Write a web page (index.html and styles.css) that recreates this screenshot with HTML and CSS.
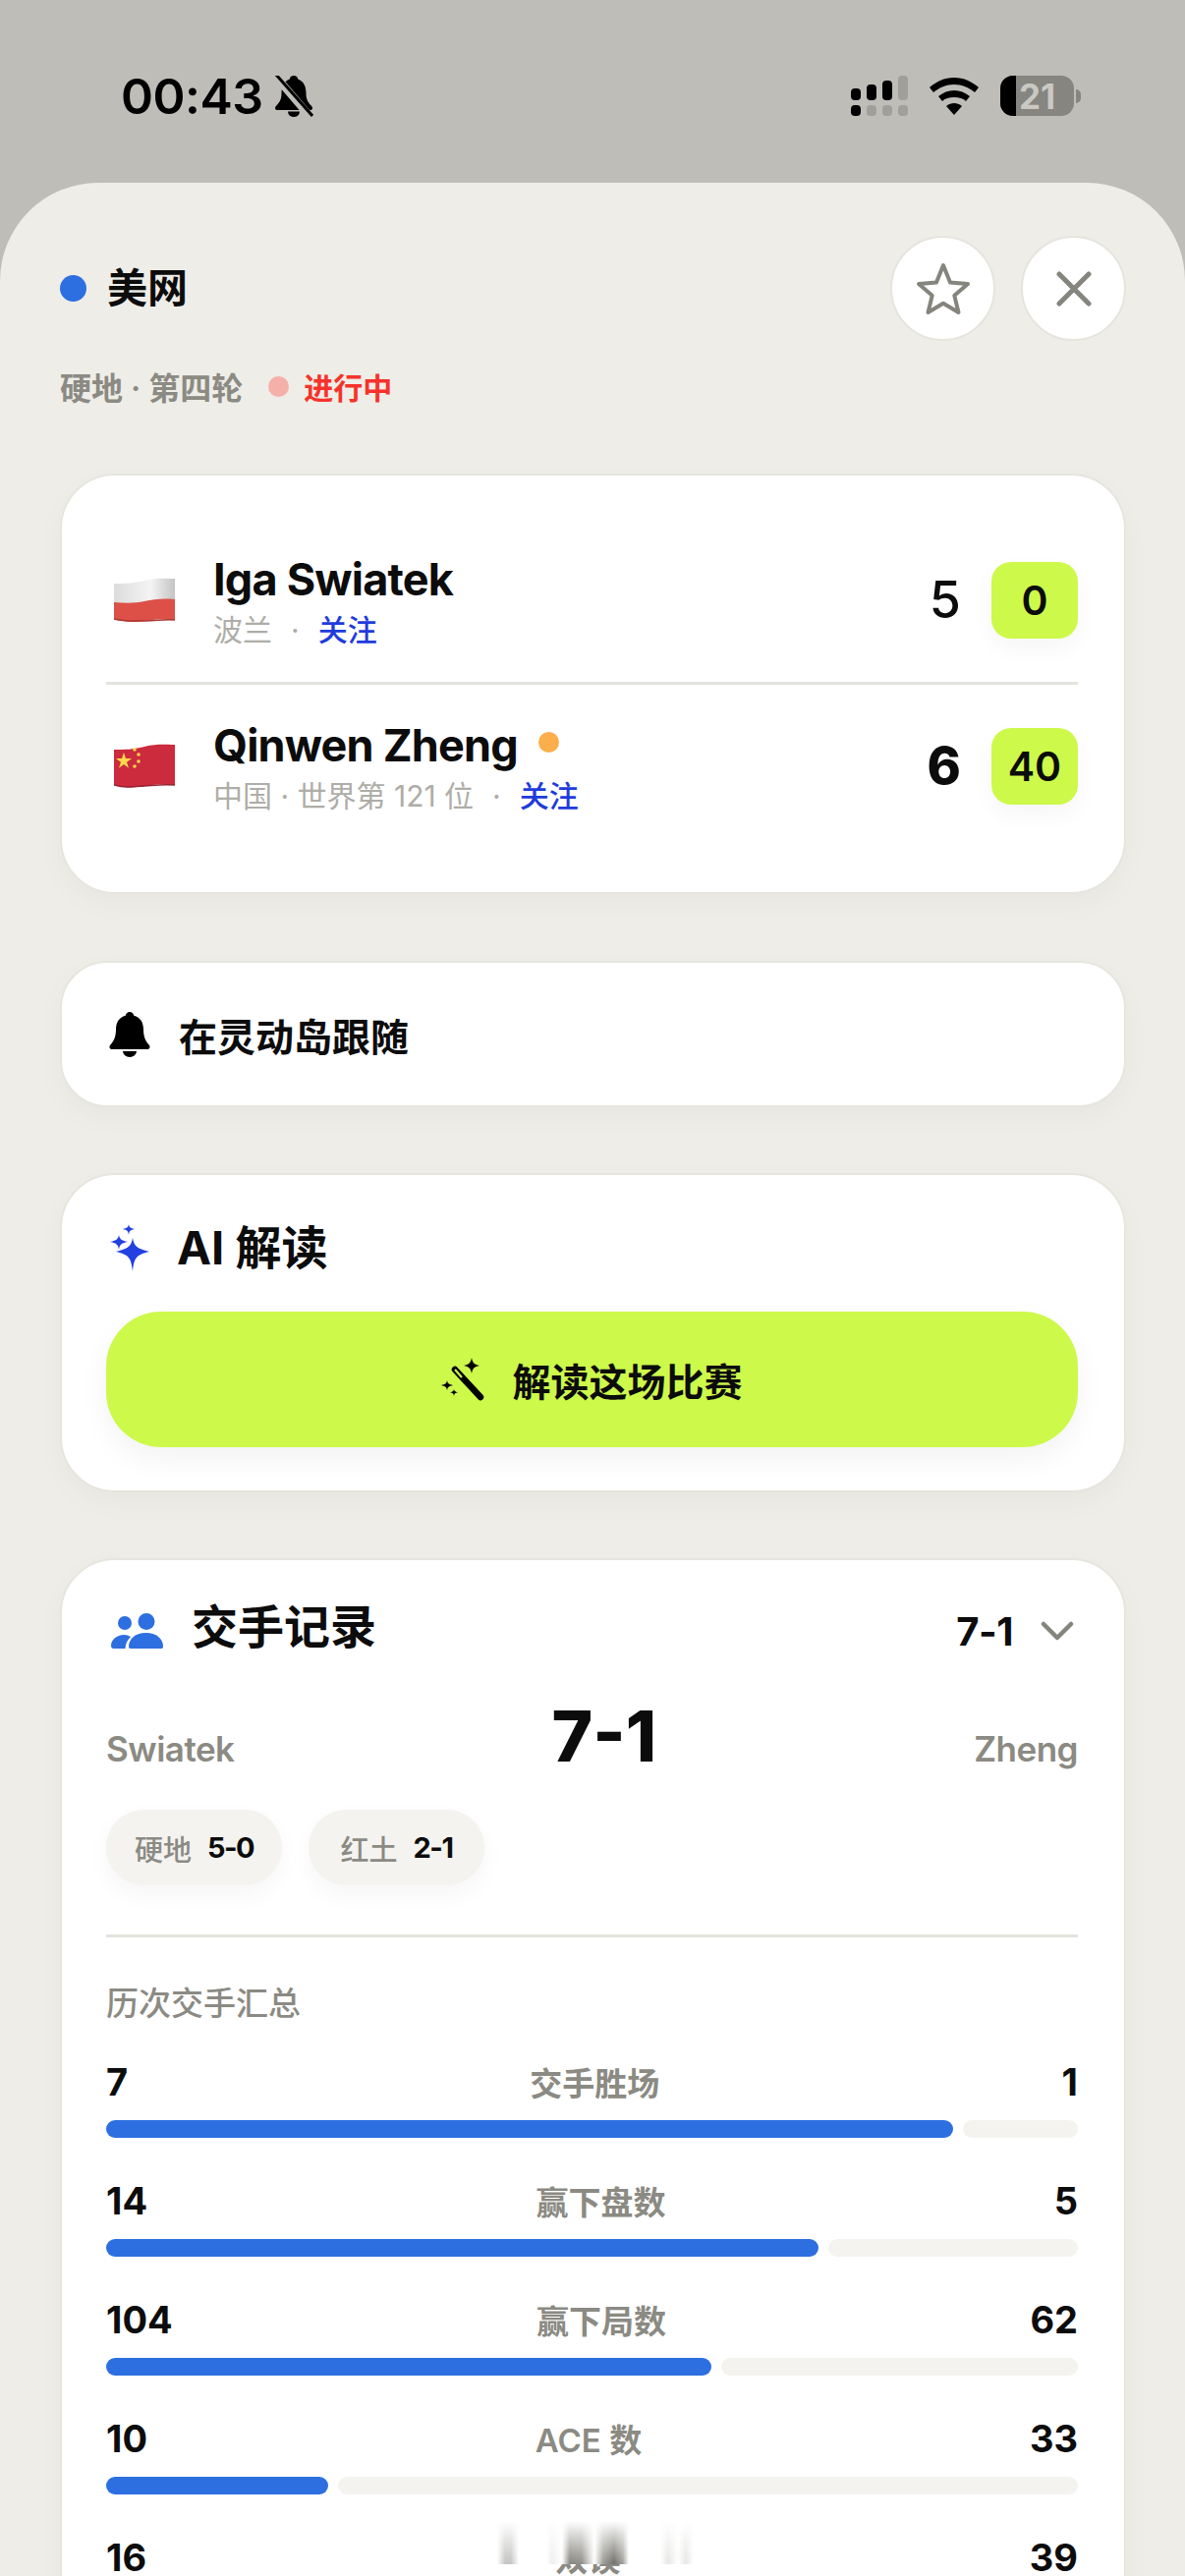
FILE: index.html
```html
<!DOCTYPE html>
<html lang="zh">
<head>
    <meta charset="UTF-8">
    <meta name="viewport" content="width=device-width, initial-scale=1.0">
    <title>美网</title>
    <link rel="stylesheet" href="styles.css">
</head>
<body>
    <!-- Barra de estado -->
    <div class="status-bar">
        <div class="status-left">
            <span class="time">00:43</span>
            <svg class="muted-bell" viewBox="0 0 40 42">
                <path d="M20 0c2.500 0 4 1.500 4.200 3.500C30 5.500 32.500 11 32.500 18c0 7 2.500 9.500 6 13.500 1 1.500.500 3.500-1.500 3.500H3c-2 0-2.500-2-1.500-3.500 3.500-4 6-6.500 6-13.500 0-7 2.500-12.500 8.300-14.500C16 1.500 17.500 0 20 0z" fill="#000"/>
                <path d="M14 36.500h12a6 5.500 0 0 1-12 0z" fill="#000"/>
                <path d="M0 -1l36 42" stroke="#bebdb8" stroke-width="8"/>
                <path d="M2 -1l37 42" stroke="#000" stroke-width="3"/>
            </svg>
        </div>
        <div class="status-right">
            <svg class="signal" viewBox="0 0 58 41">
                <rect x="0" y="13" width="10" height="12" rx="4" fill="#000"/>
                <rect x="16" y="9" width="10" height="16" rx="4" fill="#000"/>
                <rect x="32" y="5" width="10" height="20" rx="4" fill="#000"/>
                <rect x="48" y="0" width="10" height="25" rx="4" fill="#a09f9a"/>
                <rect x="0" y="30" width="10" height="11" rx="4" fill="#000"/>
                <rect x="16" y="30" width="10" height="11" rx="4" fill="#a09f9a"/>
                <rect x="32" y="30" width="10" height="11" rx="4" fill="#a09f9a"/>
                <rect x="48" y="30" width="10" height="11" rx="4" fill="#a09f9a"/>
            </svg>
            <svg class="wifi" viewBox="0 0 50 38">
                <path d="M25 0c10 0 18 4 25 10l-4 5C40 10 33 7 25 7S10 10 4 15l-4-5C7 4 15 0 25 0z" fill="#000"/>
                <path d="M25 13c6 0 11 2 16 6l-4 5c-3-3-7-4-12-4s-9 1-12 4l-4-5c5-4 10-6 16-6z" fill="#000"/>
                <path d="M25 26c3 0 5 .800 8 3L25 38l-8-9c3-2.200 5-3 8-3z" fill="#000"/>
            </svg>
            <div class="battery">
                <div class="battery-body">
                    <div class="battery-level"></div>
                    <span class="battery-text">21</span>
                </div>
                <div class="battery-nub"></div>
            </div>
        </div>
    </div>

    <div class="sheet">
        <!-- Cabecera -->
        <div class="header">
            <div class="tournament">
                <span class="tournament-dot"></span>
                <span class="tournament-name">美网</span>
            </div>
            <div class="header-buttons">
                <div class="round-btn">
                    <svg class="star-icon" viewBox="0 0 56 54">
                        <path d="M28 3l7 17.500 18 1.500-13.700 11.800L43.500 51 28 41.800 12.500 51l4.200-17.200L3 22l18-1.500z" fill="none" stroke="#85847d" stroke-width="4" stroke-linejoin="round"/>
                    </svg>
                </div>
                <div class="round-btn">
                    <svg class="close-icon" viewBox="0 0 36 36">
                        <path d="M3 3l30 30M33 3L3 33" stroke="#85847d" stroke-width="5" stroke-linecap="round"/>
                    </svg>
                </div>
            </div>
        </div>
        <div class="match-info">
            <span class="match-round">硬地 · 第四轮</span>
            <span class="live-dot"></span>
            <span class="live-text">进行中</span>
        </div>

        <!-- Marcador -->
        <div class="card score-card">
            <div class="player-row first">
                <svg class="flag" viewBox="0 0 62 46">
                    <defs>
                        <linearGradient id="white-shade" x1="0" x2="1" y1="0" y2="0">
                            <stop offset="0" stop-color="#dcdcdc"/>
                            <stop offset="0.6" stop-color="#f4f4f4"/>
                            <stop offset="1" stop-color="#c4c4c4"/>
                        </linearGradient>
                    </defs>
                    <path d="M0 6c12 0 18 0 31-3S50 1 62 1v22c-12-1-22 1-31 3S12 26 0 26z" fill="url(#white-shade)"/>
                    <path d="M0 25c12 1 22 1 31-1s19-3 31-2v21c-12-1-18-1-31 1S12 45 0 42z" fill="#dc5048"/>
                    <path d="M0 42c12 3 18 2 31 2s19-2 31-1" fill="none" stroke="#a8342e" stroke-width="1.500"/>
                </svg>
                <div class="player-info">
                    <div class="player-name">Iga Swiatek</div>
                    <div class="player-sub">波兰<span class="sep">·</span><span class="follow">关注</span></div>
                </div>
                <span class="sets">5</span>
                <span class="points">0</span>
            </div>
            <div class="player-row">
                <svg class="flag" viewBox="0 0 62 46">
                    <path d="M0 6c12 0 18 0 31-3S50 1 62 1v41c-12-1-18-1-31 1S12 45 0 42z" fill="#cc2a3d"/>
                    <path d="M0 42c12 3 18 2 31 1s19-2 31-1" fill="none" stroke="#98202f" stroke-width="1.500"/>
                    <path d="M10 9l2 6h6l-5 3.700 2 6-5-3.700-5 3.700 2-6-5-3.700h6z" fill="#fbd84a"/>
                    <circle cx="21" cy="6" r="1.800" fill="#fbd84a"/>
                    <circle cx="25" cy="11" r="1.800" fill="#fbd84a"/>
                    <circle cx="25" cy="18" r="1.800" fill="#fbd84a"/>
                    <circle cx="21" cy="23" r="1.800" fill="#fbd84a"/>
                </svg>
                <div class="player-info">
                    <div class="player-name">Qinwen Zheng<span class="serve-dot"></span></div>
                    <div class="player-sub">中国 · 世界第 121 位<span class="sep">·</span><span class="follow">关注</span></div>
                </div>
                <span class="sets leading">6</span>
                <span class="points">40</span>
            </div>
        </div>

        <!-- Isla dinámica -->
        <div class="card follow-card">
            <svg class="bell-icon" viewBox="0 0 42 46">
                <path d="M21 0c2.500 0 4 1.800 4.200 3.800C32 5.500 35 11 35 18c0 8 2.500 12 6 16 1 1.500.500 4-2 4H3c-2.500 0-3-2.500-2-4 3.500-4 6-8 6-16 0-7 3-12.500 9.800-14.200C17 1.800 18.500 0 21 0z" fill="#000"/>
                <path d="M14 40h14a7 6 0 0 1-14 0z" fill="#000"/>
            </svg>
            <span class="follow-text">在灵动岛跟随</span>
        </div>

        <!-- AI -->
        <div class="card ai-card">
            <div class="ai-title">
                <svg class="sparkles" viewBox="0 0 42 48">
                    <path d="M24 14c1.500 8 4 11 17 14-13 3-15.500 6-17 20-1.500-14-4-17-17-20 13-3 15.500-6 17-14z" fill="#2340e0"/>
                    <path d="M10 11c.800 4 2 5.500 9 7-7 1.500-8.200 3-9 8-.800-5-2-6.500-9-8 7-1.500 8.200-3 9-7z" fill="#2340e0"/>
                    <path d="M20 0c.500 3 1.500 4 6 5-4.500 1-5.500 2-6 6-.500-4-1.500-5-6-6 4.500-1 5.500-2 6-5z" fill="#2340e0"/>
                </svg>
                <span>AI 解读</span>
            </div>
            <div class="ai-button">
                <svg class="wand" viewBox="0 0 44 44">
                    <path d="M14 12l26 28" stroke="#000" stroke-width="6.500" stroke-linecap="round"/>
                    <path d="M14 12l7 8" stroke="#cdf94b" stroke-width="2"/>
                    <path d="M31 0c1 5 2.500 7 8 8-5.500 1-7 3-8 8-1-5-2.500-7-8-8 5.500-1 7-3 8-8z" fill="#000"/>
                    <path d="M6 23c.600 3 1.500 4 6 5-4.500 1-5.400 2-6 5-.600-3-1.500-4-6-5 4.500-1 5.400-2 6-5z" fill="#000"/>
                    <path d="M13 32c.400 2 1 2.600 4 3.200-3 .600-3.600 1.200-4 3.800-.400-2.600-1-3.200-4-3.800 3-.600 3.600-1.200 4-3.200z" fill="#000"/>
                </svg>
                <span>解读这场比赛</span>
            </div>
        </div>

        <!-- Historial -->
        <div class="card h2h-card">
            <div class="h2h-top">
                <svg class="people" viewBox="0 0 53 36">
                    <circle cx="14" cy="10" r="7" fill="#2d6fe0"/>
                    <circle cx="36" cy="8.500" r="8.500" fill="#2d6fe0"/>
                    <path d="M0 33c0-6 6-11 13-11 3 0 5 .700 7 2-3 3-5.500 7-5.500 12H2.500C1 36 0 35 0 33z" fill="#2d6fe0"/>
                    <path d="M20 36c-1.500 0-2-1-2-2 0-8 7-14 17.500-14S53 26 53 34c0 1-.500 2-2 2z" fill="#2d6fe0"/>
                </svg>
                <span class="h2h-title">交手记录</span>
                <span class="h2h-short">7-1</span>
                <svg class="chevron" viewBox="0 0 34 20">
                    <path d="M3 3l14 14L31 3" fill="none" stroke="#85847d" stroke-width="4.500" stroke-linecap="round" stroke-linejoin="round"/>
                </svg>
            </div>
            <div class="h2h-score">
                <span class="h2h-name">Swiatek</span>
                <span class="h2h-big">7-1</span>
                <span class="h2h-name">Zheng</span>
            </div>
            <div class="surfaces">
                <div class="pill">硬地<b>5-0</b></div>
                <div class="pill">红土<b>2-1</b></div>
            </div>
            <div class="summary-title">历次交手汇总</div>

            <div class="stat">
                <div class="stat-head"><b>7</b><span>交手胜场</span><b>1</b></div>
                <div class="bar"><div class="bar-fill" style="width: 87.2%"></div><div class="bar-rest"></div></div>
            </div>
            <div class="stat">
                <div class="stat-head"><b>14</b><span>赢下盘数</span><b>5</b></div>
                <div class="bar"><div class="bar-fill" style="width: 73.3%"></div><div class="bar-rest"></div></div>
            </div>
            <div class="stat">
                <div class="stat-head"><b>104</b><span>赢下局数</span><b>62</b></div>
                <div class="bar"><div class="bar-fill" style="width: 62.3%"></div><div class="bar-rest"></div></div>
            </div>
            <div class="stat">
                <div class="stat-head"><b>10</b><span>ACE 数</span><b>33</b></div>
                <div class="bar"><div class="bar-fill" style="width: 22.9%"></div><div class="bar-rest"></div></div>
            </div>
            <div class="stat">
                <div class="stat-head"><b>16</b><span>双误</span><b>39</b></div>
            </div>
        </div>
    </div>

    <!-- Franja borrosa sobre la última fila -->
    <div class="smear"></div>
</body>
</html>
```

FILE: styles.css
```css
/* Globales */
html, body {
    margin: 0;
    padding: 0;
}

body {
    width: 1206px;
    height: 2622px;
    overflow: hidden;
    background-color: #bebdb8;
    font-family: Inter, "Noto Sans CJK SC", sans-serif;
    color: #0c0c0c;
}

/* Barra de estado */
.status-bar {
    height: 186px;
    box-sizing: border-box;
    padding: 75px 106px 0 123px;
    display: flex;
    justify-content: space-between;
    align-items: flex-start;
}

.status-left {
    display: flex;
    align-items: center;
    gap: 11px;
}

.time {
    font-size: 50px;
    line-height: 46px;
    font-weight: 600;
    color: #000;
    letter-spacing: -0.5px;
}

.muted-bell {
    width: 40px;
    height: 42px;
}

.status-right {
    display: flex;
    align-items: center;
    gap: 22px;
    padding-top: 2px;
}

.signal {
    width: 58px;
    height: 41px;
}

.wifi {
    width: 50px;
    height: 38px;
}

.battery {
    display: flex;
    align-items: center;
    gap: 2px;
}

.battery-body {
    position: relative;
    width: 75px;
    height: 41px;
    border-radius: 13px;
    background-color: #868580;
    overflow: hidden;
    display: flex;
    align-items: center;
    justify-content: center;
}

.battery-level {
    position: absolute;
    left: 0;
    top: 0;
    bottom: 0;
    width: 16px;
    background-color: #000;
}

.battery-text {
    position: relative;
    font-size: 35px;
    font-weight: 700;
    color: #c9c8c3;
}

.battery-nub {
    width: 5px;
    height: 14px;
    background-color: #868580;
    border-radius: 0 6px 6px 0;
}

/* Hoja */
.sheet {
    height: 2436px;
    box-sizing: border-box;
    padding: 54px 60px 0 61px;
    background-color: #eeede7;
    border-radius: 100px 100px 0 0;
    overflow: hidden;
}

.header {
    display: flex;
    justify-content: space-between;
    align-items: center;
}

.tournament {
    display: flex;
    align-items: center;
    gap: 21px;
}

.tournament-dot {
    width: 27px;
    height: 27px;
    border-radius: 50%;
    background-color: #2d6fe0;
}

.tournament-name {
    font-size: 41px;
    font-weight: 700;
    padding-bottom: 8px;
}

.header-buttons {
    display: flex;
    gap: 26px;
}

.round-btn {
    width: 107px;
    height: 107px;
    box-sizing: border-box;
    border: 2px solid #e5e4de;
    border-radius: 50%;
    background-color: #fff;
    display: flex;
    align-items: center;
    justify-content: center;
}

.star-icon {
    width: 56px;
    height: 54px;
}

.close-icon {
    width: 36px;
    height: 36px;
}

.match-info {
    display: flex;
    align-items: center;
    margin-top: 23px;
    height: 46px;
}

.match-round {
    font-size: 32px;
    font-weight: 600;
    color: #8b8a83;
}

.live-dot {
    width: 21px;
    height: 21px;
    border-radius: 50%;
    background-color: #f6b0aa;
    margin: 0 15px 0 26px;
}

.live-text {
    font-size: 30px;
    font-weight: 600;
    color: #f5332b;
}

/* Tarjetas */
.card {
    box-sizing: border-box;
    background-color: #fff;
    border: 2px solid #e6e5de;
    border-radius: 56px;
    box-shadow: 0 10px 30px rgba(0, 0, 0, 0.03);
    padding-left: 45px;
    padding-right: 47px;
}

.score-card {
    height: 428px;
    margin-top: 66px;
    padding-top: 44px;
}

.player-row {
    display: flex;
    align-items: center;
    height: 166px;
}

.player-row.first {
    border-bottom: 3px solid #e4e3dd;
}

.flag {
    width: 62px;
    height: 46px;
    margin-left: 8px;
    flex-shrink: 0;
}

.player-info {
    flex: 1;
    margin-left: 39px;
}

.player-name {
    font-size: 45px;
    line-height: 56px;
    font-weight: 700;
    letter-spacing: -0.8px;
    display: flex;
    align-items: center;
}

.serve-dot {
    width: 21px;
    height: 21px;
    border-radius: 50%;
    background-color: #fbae4b;
    margin-left: 21px;
    margin-bottom: 6px;
}

.player-sub {
    font-size: 30px;
    line-height: 40px;
    margin-top: 3px;
    color: #aeada7;
}

.sep {
    margin: 0 19px;
}

.follow {
    color: #1f3bdc;
    font-weight: 500;
}

.sets {
    font-size: 52px;
    line-height: 78px;
    font-weight: 500;
    margin-right: 31px;
}

.sets.leading {
    font-weight: 800;
}

.points {
    width: 88px;
    height: 78px;
    border-radius: 20px;
    background-color: #cdf94b;
    box-shadow: 0 10px 24px rgba(0, 0, 0, 0.04);
    font-size: 41px;
    font-weight: 600;
    display: flex;
    align-items: center;
    justify-content: center;
}

.follow-card {
    height: 149px;
    margin-top: 68px;
    border-radius: 48px;
    display: flex;
    align-items: center;
    gap: 29px;
    padding-left: 48px;
}

.bell-icon {
    width: 42px;
    height: 46px;
}

.follow-text {
    font-size: 39px;
    font-weight: 700;
}

.ai-card {
    height: 325px;
    margin-top: 67px;
    padding-top: 44px;
}

.ai-title {
    display: flex;
    align-items: center;
    gap: 27px;
    padding-left: 3px;
    font-size: 47px;
    line-height: 60px;
    font-weight: 700;
}

.sparkles {
    width: 42px;
    height: 48px;
}

.ai-button {
    margin-top: 35px;
    height: 138px;
    border-radius: 56px;
    background-color: #cdf94b;
    box-shadow: 0 12px 30px rgba(0, 0, 0, 0.05);
    display: flex;
    align-items: center;
    justify-content: center;
    gap: 28px;
    font-size: 39px;
    font-weight: 700;
}

.wand {
    width: 44px;
    height: 44px;
}

/* Historial */
.h2h-card {
    height: 1100px;
    margin-top: 67px;
    padding-top: 42px;
}

.h2h-top {
    display: flex;
    align-items: center;
    height: 60px;
    padding-left: 5px;
}

.people {
    width: 53px;
    height: 36px;
}

.h2h-title {
    font-size: 47px;
    line-height: 52px;
    padding-bottom: 8px;
    font-weight: 700;
    margin-left: 29px;
    flex: 1;
}

.h2h-short {
    font-size: 40px;
    font-weight: 700;
    letter-spacing: -0.5px;
    margin-right: 28px;
}

.chevron {
    width: 34px;
    height: 20px;
    margin-right: 4px;
}

.h2h-score {
    display: flex;
    justify-content: space-between;
    align-items: flex-end;
    margin-top: 41px;
}

.h2h-name {
    font-size: 35px;
    line-height: 46px;
    font-weight: 600;
    letter-spacing: -0.5px;
    color: #8b8a83;
}

.h2h-big {
    font-size: 71px;
    line-height: 72px;
    font-weight: 800;
}

.surfaces {
    display: flex;
    gap: 27px;
    margin-top: 39px;
    padding-bottom: 50px;
    border-bottom: 3px solid #e4e3dd;
}

.pill {
    height: 77px;
    width: 179px;
    box-sizing: border-box;
    border-radius: 38px;
    background-color: #f4f3ef;
    box-shadow: 0 10px 24px rgba(0, 0, 0, 0.04);
    display: flex;
    align-items: center;
    justify-content: center;
    gap: 16px;
    font-size: 29px;
    font-weight: 500;
    color: #8b8a83;
}

.pill b {
    font-size: 29px;
    font-weight: 700;
    letter-spacing: -1.5px;
    color: #0c0c0c;
}

.summary-title {
    margin-top: 44px;
    font-size: 33px;
    line-height: 46px;
    font-weight: 500;
    color: #8b8a83;
}

.stat {
    height: 121px;
}

.summary-title + .stat {
    margin-top: 34px;
}

.stat-head {
    display: flex;
    justify-content: space-between;
    align-items: center;
    height: 46px;
}

.stat-head b {
    font-size: 38px;
    font-weight: 700;
}

.stat-head span {
    font-size: 33px;
    font-weight: 600;
    color: #8b8a83;
}

.bar {
    display: flex;
    gap: 10px;
    height: 18px;
    margin-top: 16px;
}

.bar-fill {
    background-color: #2d6fe0;
    border-radius: 9px;
}

.bar-rest {
    flex: 1;
    background-color: #f4f3ef;
    border-radius: 9px;
}

/* Franja borrosa */
.smear {
    position: absolute;
    left: 500px;
    top: 2566px;
    width: 210px;
    height: 44px;
    background:
        linear-gradient(to bottom, #fff 0%, rgba(255, 255, 255, 0) 100%),
        linear-gradient(to right, #fff 6px, #c4c4c2 14px, #c4c4c2 20px, #fff 28px, #fff 56px, #eee 62px, #fff 72px, #85847d 80px, #8f8e88 92px, #fff 105px, #9b9a94 114px, #6f6e69 125px, #a3a29c 134px, #fff 140px, #fff 172px, #e6e6e4 180px, #fff 190px, #e6e6e4 198px, #fff 206px);
}
```
